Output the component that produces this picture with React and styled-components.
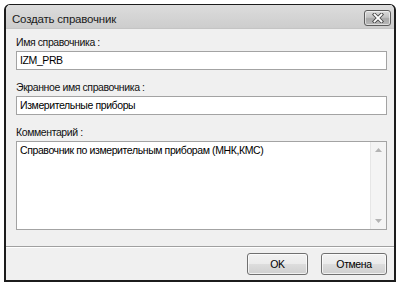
import React from 'react';
import styled, { createGlobalStyle } from 'styled-components';

const GlobalStyle = createGlobalStyle`
  html, body {
    margin: 0;
    padding: 0;
    background: #ffffff;
  }
  body {
    font-family: "Liberation Sans", Arial, sans-serif;
    font-size: 10.5px;
    letter-spacing: -0.4px;
    color: #000;
  }
`;

const fields = [
  { label: 'Имя справочника :', value: 'IZM_PRB' },
  { label: 'Экранное имя справочника :', value: 'Измерительные приборы' },
];

const CloseIcon = () => (
  <svg width="12" height="10" viewBox="0 0 12 10">
    <path d="M2.5 1.5 L9.5 8.5 M9.5 1.5 L2.5 8.5" stroke="#4a4a4a" strokeWidth="3.6" strokeLinecap="square" fill="none" />
    <path d="M2.5 1.5 L9.5 8.5 M9.5 1.5 L2.5 8.5" stroke="#ffffff" strokeWidth="1.8" strokeLinecap="square" fill="none" />
  </svg>
);

const Arrow = ({ down }) => (
  <svg width="7" height="4" viewBox="0 0 7 4">
    <path d={down ? 'M0 0 L7 0 L3.5 4 Z' : 'M0 4 L7 4 L3.5 0 Z'} fill="#b4b4b4" />
  </svg>
);

function App() {
  return (
    <>
      <GlobalStyle />
      <Window>
        <TitleBar>
          <Title>Создать справочник</Title>
          <CloseButton>
            <CloseIcon />
          </CloseButton>
        </TitleBar>
        <Body>
          {fields.map(f => (
            <Group key={f.label}>
              <Label>{f.label}</Label>
              <Input>{f.value}</Input>
            </Group>
          ))}
          <Group>
            <Label>Комментарий :</Label>
            <Memo>
              <MemoText>Справочник по измерительным приборам (МНК,КМС)</MemoText>
              <ScrollBar>
                <Arrow />
                <Arrow down />
              </ScrollBar>
            </Memo>
          </Group>
        </Body>
        <Footer>
          <Button width={61}>OK</Button>
          <Button width={66}>Отмена</Button>
        </Footer>
      </Window>
    </>
  );
}

const Window = styled.div`
  box-sizing: border-box;
  margin: 4px 0 0 4px;
  width: 392px;
  height: 278px;
  display: flex;
  flex-direction: column;
  border: 1px solid #1c1c1c;
  border-width: 1px 2px 2px 2px;
  border-radius: 6px 6px 0 0;
  background: #f0f0f0;
  overflow: hidden;
`;

const TitleBar = styled.div`
  height: 23px;
  flex: none;
  display: flex;
  align-items: center;
  justify-content: space-between;
  padding: 0 3px 0 6px;
  background: linear-gradient(#dcdcdc, #cdcdcd);
  border-bottom: 1px solid #c4c4c4;
`;

const Title = styled.div`
  font-size: 11.5px;
  letter-spacing: -0.2px;
  color: #1a1a1a;
  padding-top: 4px;
`;

const CloseButton = styled.div`
  box-sizing: border-box;
  width: 27px;
  height: 16px;
  margin-top: 2px;
  border: 1px solid #5c5c5c;
  border-radius: 3px;
  background: linear-gradient(#dadada 0%, #c2c2c2 45%, #a8a8a8 55%, #b8b8b8 100%);
  box-shadow: inset 0 0 0 1px rgba(255, 255, 255, 0.55);
  display: flex;
  align-items: center;
  justify-content: center;
`;

const Body = styled.div`
  flex: 1;
  display: flex;
  flex-direction: column;
  gap: 11px;
  padding: 7px 7px 0 10px;
`;

const Group = styled.div`
  display: flex;
  flex-direction: column;
  gap: 2px;
`;

const Label = styled.div`
  line-height: 13px;
  color: #111;
`;

const Input = styled.div`
  box-sizing: border-box;
  height: 19px;
  line-height: 17px;
  padding: 0 3px;
  background: #ffffff;
  border: 1px solid #a3a3a3;
  color: #000;
`;

const Memo = styled.div`
  box-sizing: border-box;
  height: 89px;
  display: flex;
  background: #ffffff;
  border: 1px solid #a3a3a3;
`;

const MemoText = styled.div`
  flex: 1;
  padding: 2px 3px;
  line-height: 13px;
`;

const ScrollBar = styled.div`
  width: 15px;
  display: flex;
  flex-direction: column;
  align-items: center;
  justify-content: space-between;
  padding: 6px 0 6px;
  background: #f4f4f4;
  border-left: 1px solid #e6e6e6;
`;

const Footer = styled.div`
  height: 33px;
  flex: none;
  display: flex;
  align-items: center;
  justify-content: flex-end;
  gap: 13px;
  padding: 0 7px 0 0;
  border-top: 1px solid #a0a0a0;
  box-shadow: inset 0 1px 0 #ffffff;
`;

const Button = styled.div`
  box-sizing: border-box;
  width: ${p => p.width}px;
  height: 22px;
  display: flex;
  align-items: center;
  justify-content: center;
  border: 1px solid #707070;
  border-radius: 3px;
  background: linear-gradient(#f2f2f2 0%, #ebebeb 50%, #dddddd 51%, #cfcfcf 100%);
  box-shadow: inset 0 0 0 1px rgba(255, 255, 255, 0.7);
  color: #000;
`;

export default App;
